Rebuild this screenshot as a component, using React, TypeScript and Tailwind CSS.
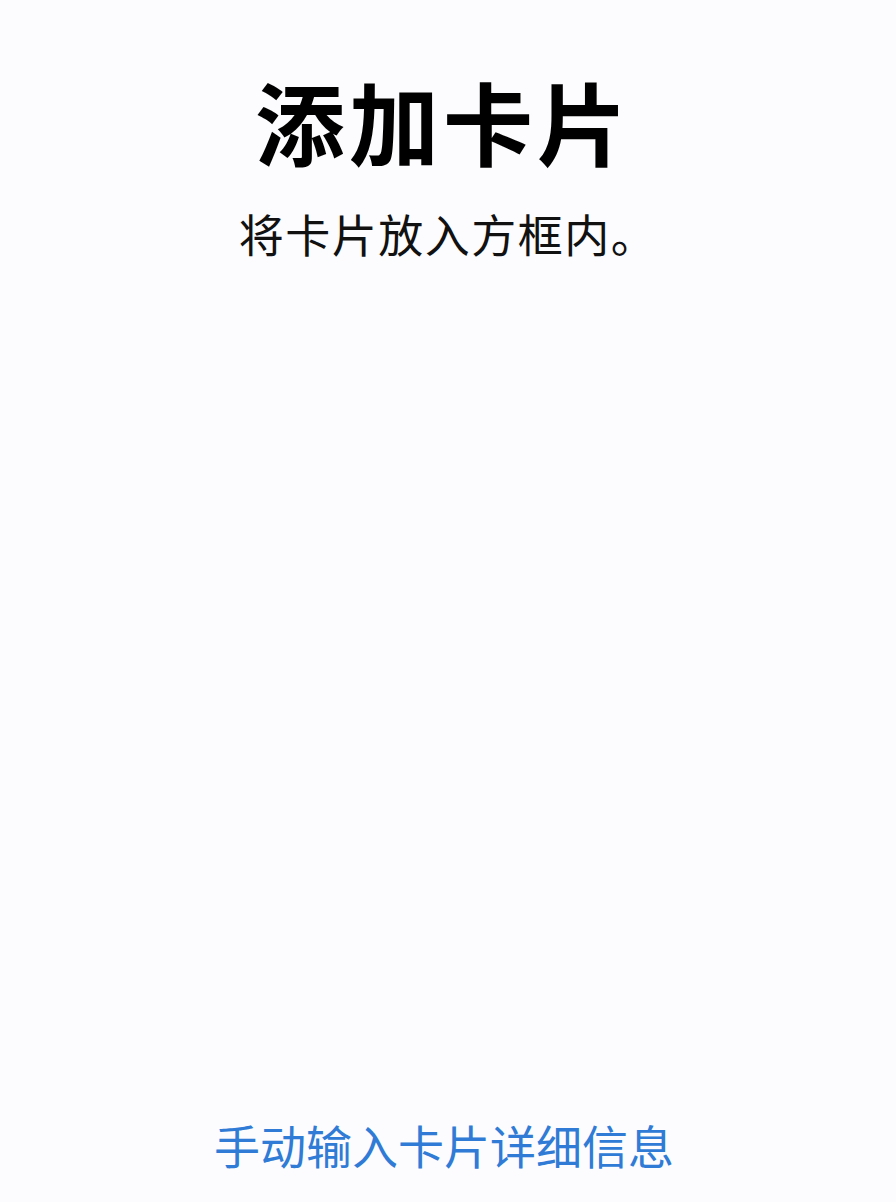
export default function App() {
  return (
    <div
      className="flex h-[1202px] w-full flex-col items-center bg-[#fcfbfd] pt-[75px] pb-[35px]"
      style={{ fontFamily: '"Noto Sans CJK SC", "Noto Sans", sans-serif' }}
    >
      <h1 className="mr-[10px] text-[90px] font-bold leading-none tracking-[4px] text-black">添加卡片</h1>
      <p className="mt-[46px] text-[45px] leading-none tracking-[1.5px] text-[#111]">将卡片放入方框内。</p>
      <button className="mt-auto mr-[8px] text-[46px] leading-none text-[#2f7bd6]">手动输入卡片详细信息</button>
    </div>
  );
}
